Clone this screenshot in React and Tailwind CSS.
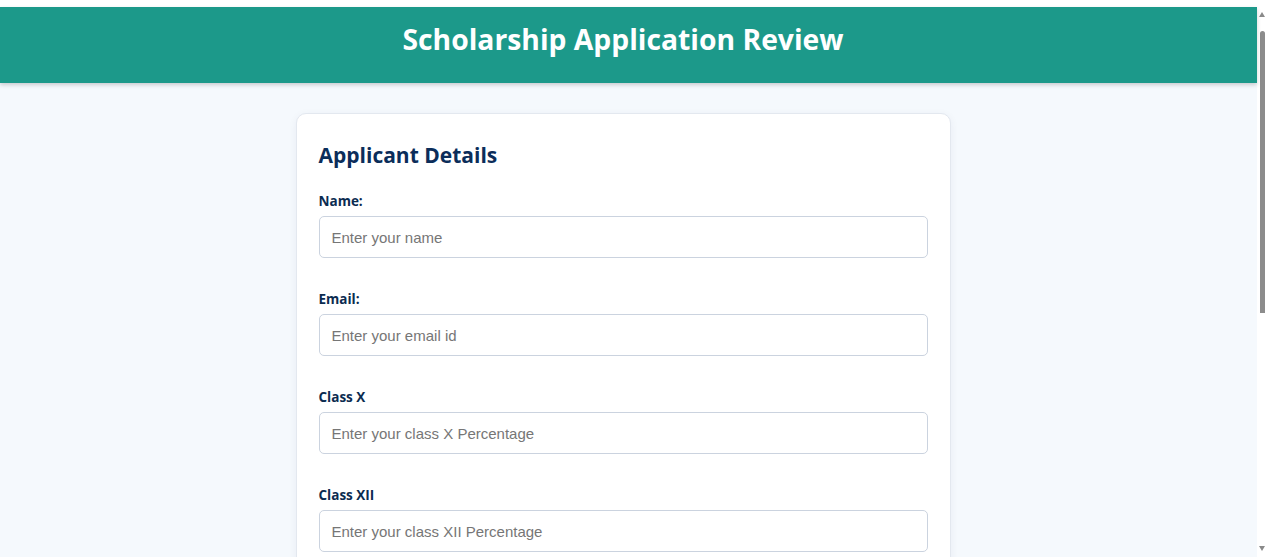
import React from "react";

const fields = [
  { label: "Name:", placeholder: "Enter your name", type: "text" },
  { label: "Email:", placeholder: "Enter your email id", type: "email" },
  { label: "Class X", placeholder: "Enter your class X Percentage", type: "text" },
  { label: "Class XII", placeholder: "Enter your class XII Percentage", type: "text" },
];

export default function App() {
  return (
    <div className="flex h-[557px] w-full overflow-hidden bg-white">
      <div className="flex min-w-0 flex-1 flex-col pt-[7px]">
        <header className="relative z-10 flex h-[76px] shrink-0 items-center justify-center bg-[#1c998a] pb-[11px] pr-[11px] shadow-[0_2px_4px_rgba(0,0,0,0.18)]">
          <h1
            className="text-[28.3px] font-bold leading-none text-white"
            style={{ fontFamily: '"Open Sans", "Noto Sans", sans-serif' }}
          >
            Scholarship Application Review
          </h1>
        </header>
        <main className="flex flex-1 justify-center bg-[#f5f9fd] pr-[11px] pt-[30px]">
          <div className="h-fit w-[655px] shrink-0 rounded-[10px] border border-[#e3e8ef] bg-white px-[22px] pb-[30px] pt-[26px] shadow-[0_2px_8px_rgba(15,40,80,0.06)]">
            <h2
              className="mb-[20px] text-[21px] font-bold leading-[31px] text-[#0b2d5a]"
              style={{ fontFamily: '"Open Sans", "Noto Sans", sans-serif' }}
            >
              Applicant Details
            </h2>
            <form className="flex flex-col gap-[31px]">
              {fields.map((f) => (
                <div key={f.label} className="flex flex-col">
                  <label
                    className="mb-[5px] text-[13.5px] font-bold leading-[20px] text-[#0b2b50]"
                    style={{ fontFamily: '"Open Sans", "Noto Sans", sans-serif' }}
                  >
                    {f.label}
                  </label>
                  <input
                    type={f.type}
                    placeholder={f.placeholder}
                    className="h-[42px] w-full rounded-[5px] border border-[#cbd3df] bg-white px-[12px] text-[15px] text-[#222] outline-none placeholder:text-[#767676]"
                    style={{ fontFamily: '"Liberation Sans", Arial, sans-serif' }}
                  />
                </div>
              ))}
            </form>
          </div>
        </main>
      </div>
      <div className="flex w-[8px] shrink-0 flex-col items-end bg-white">
        <div className="mt-[12px] h-0 w-0 border-x-[3px] border-b-[5px] border-x-transparent border-b-[#8a8a8a]" />
        <div className="mt-[14px] h-[282px] w-[5px] rounded-t-[3px] bg-[#8c8c8c]" />
        <div className="flex-1" />
        <div className="mb-[6px] h-0 w-0 border-x-[3px] border-t-[5px] border-x-transparent border-t-[#8a8a8a]" />
      </div>
    </div>
  );
}
